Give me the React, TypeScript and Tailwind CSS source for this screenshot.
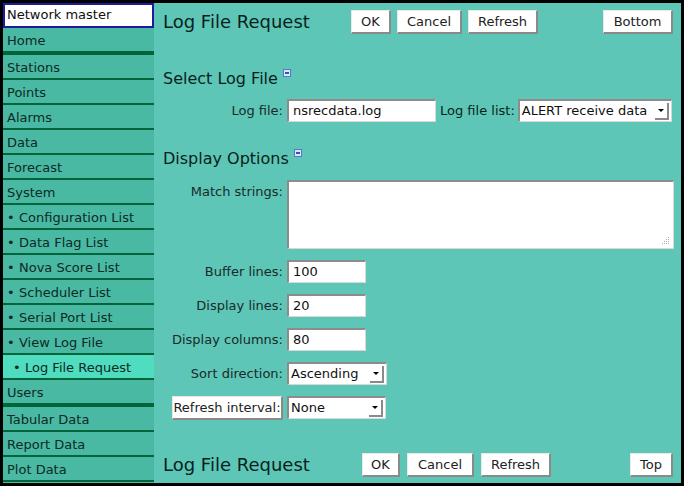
import React from 'react'

const sideItems: { label: string; sub?: boolean; active?: boolean; thick?: boolean }[] = [
  { label: 'Home', thick: true },
  { label: 'Stations' },
  { label: 'Points' },
  { label: 'Alarms' },
  { label: 'Data' },
  { label: 'Forecast' },
  { label: 'System' },
  { label: 'Configuration List', sub: true },
  { label: 'Data Flag List', sub: true },
  { label: 'Nova Score List', sub: true },
  { label: 'Scheduler List', sub: true },
  { label: 'Serial Port List', sub: true },
  { label: 'View Log File', sub: true },
  { label: 'Log File Request', sub: true, active: true },
  { label: 'Users', thick: true },
  { label: 'Tabular Data' },
  { label: 'Report Data' },
  { label: 'Plot Data' },
]

function Btn({ children, w }: { children: React.ReactNode; w: string }) {
  return (
    <button
      className={`${w} h-[24px] bg-white text-[13px] text-[#222] leading-none whitespace-nowrap px-0 border-t border-l border-t-[#e8e8e8] border-l-[#e8e8e8] border-r-2 border-b-2 border-r-[#8a8a8a] border-b-[#8a8a8a]`}
    >
      {children}
    </button>
  )
}

function Collapse() {
  return (
    <span className="inline-flex items-center justify-center w-[8px] h-[8px] ml-[5px] mt-[2px] border border-[#5577cc] bg-[#dde6ff] align-top">
      <span className="w-[4px] h-[2px] bg-[#3355aa]" />
    </span>
  )
}

function TextInput({ value, w }: { value: string; w: string }) {
  return (
    <div
      className={`${w} h-[23px] shrink-0 bg-white border-t-2 border-l-2 border-t-[#8c8c8c] border-l-[#8c8c8c] border-b border-r border-b-[#d8d8d8] border-r-[#d8d8d8] px-[4px] text-[13px] leading-[20px] text-[#111]`}
    >
      {value}
    </div>
  )
}

function Select({ value, w }: { value: string; w: string }) {
  return (
    <div
      className={`${w} h-[23px] shrink-0 bg-white flex items-center border-t-2 border-l-2 border-t-[#8c8c8c] border-l-[#8c8c8c] border-b border-r border-b-[#d8d8d8] border-r-[#d8d8d8] pl-[2px] pr-[2px] text-[13px] text-[#111]`}
    >
      <span className="flex-1 whitespace-nowrap">{value}</span>
      <span className="w-[14px] h-[17px] flex items-center justify-center border-r-2 border-b-2 border-r-[#8a8a8a] border-b-[#8a8a8a] bg-white">
        <span className="w-0 h-0 border-l-[3px] border-r-[3px] border-t-[3px] border-l-transparent border-r-transparent border-t-black" />
      </span>
    </div>
  )
}

function Label({ children }: { children: React.ReactNode }) {
  return <div className="text-right text-[13px] text-[#1a2a2a] leading-[23px] whitespace-nowrap">{children}</div>
}

export default function App() {
  return (
    <div
      className="w-[684px] h-[486px] border-[3px] border-black bg-[#5dc6b6] flex overflow-hidden"
      style={{ fontFamily: '"DejaVu Sans", sans-serif' }}
    >
      <div className="w-[151px] shrink-0 bg-[#49b9a3] flex flex-col">
        <div className="h-[25px] bg-white border-2 border-[#1c1c9c] px-[2px] text-[13px] leading-[20px] text-[#111]">
          Network master
        </div>
        {sideItems.map((it) => (
          <div
            key={it.label}
            className={`h-[25px] shrink-0 border-b-2 border-[#00663a] text-[13px] leading-[25px] text-[#0d2a24] whitespace-nowrap ${
              it.thick ? 'h-[27px] border-b-4' : ''
            } ${it.active ? 'bg-[#50dcbf] pl-[10px]' : 'pl-[4px]'}`}
          >
            {it.sub ? (
              <>
                <span className="inline-block w-[12px]">•</span>
                {it.label}
              </>
            ) : (
              it.label
            )}
          </div>
        ))}
      </div>

      <div className="flex-1 min-w-0 pl-[9px] pr-[8px] flex flex-col text-[#0a1f1c]">
        <div className="flex items-center mt-[7px] h-[24px]">
          <div className="w-[188px] shrink-0 text-[18px] leading-none whitespace-nowrap">Log File Request</div>
          <div className="flex gap-[6px]">
            <Btn w="w-[40px]">OK</Btn>
            <Btn w="w-[65px]">Cancel</Btn>
            <Btn w="w-[70px]">Refresh</Btn>
          </div>
          <div className="flex-1" />
          <Btn w="w-[70px]">Bottom</Btn>
        </div>

        <div className="mt-[33px] h-[24px] text-[16px] leading-[24px] font-medium whitespace-nowrap">
          Select Log File
          <Collapse />
        </div>

        <div className="mt-[8px] flex items-center">
          <div className="w-[120px] shrink-0">
            <Label>Log file:</Label>
          </div>
          <div className="ml-[4px] shrink-0">
            <TextInput value="nsrecdata.log" w="w-[149px]" />
          </div>
          <div className="ml-[4px] shrink-0 text-[13px] leading-[23px] whitespace-nowrap">Log file list:</div>
          <div className="ml-[3px] shrink-0">
            <Select value="ALERT receive data" w="w-[154px]" />
          </div>
        </div>

        <div className="mt-[25px] h-[24px] text-[16px] leading-[24px] font-medium whitespace-nowrap">
          Display Options
          <Collapse />
        </div>

        <div className="mt-[9px] grid grid-cols-[120px_1fr] gap-x-[4px] gap-y-[11px]">
          <div>
            <Label>Match strings:</Label>
          </div>
          <div className="relative w-[387px] h-[69px] bg-white border-t-2 border-l-2 border-t-[#8c8c8c] border-l-[#8c8c8c] border-b border-r border-b-[#d8d8d8] border-r-[#d8d8d8]">
            <svg className="absolute right-[3px] bottom-[3px]" width="9" height="9" viewBox="0 0 9 9">
              <g fill="#aaa">
                <rect x="7" y="1" width="1" height="1" />
                <rect x="5" y="3" width="1" height="1" />
                <rect x="7" y="3" width="1" height="1" />
                <rect x="3" y="5" width="1" height="1" />
                <rect x="5" y="5" width="1" height="1" />
                <rect x="7" y="5" width="1" height="1" />
                <rect x="1" y="7" width="1" height="1" />
                <rect x="3" y="7" width="1" height="1" />
                <rect x="5" y="7" width="1" height="1" />
                <rect x="7" y="7" width="1" height="1" />
              </g>
            </svg>
          </div>

          <Label>Buffer lines:</Label>
          <TextInput value="100" w="w-[79px]" />

          <Label>Display lines:</Label>
          <TextInput value="20" w="w-[79px]" />

          <Label>Display columns:</Label>
          <TextInput value="80" w="w-[79px]" />

          <Label>Sort direction:</Label>
          <Select value="Ascending" w="w-[100px]" />

          <div className="flex justify-end">
            <Btn w="w-[111px]">Refresh interval:</Btn>
          </div>
          <Select value="None" w="w-[99px]" />
        </div>

        <div className="flex-1" />

        <div className="flex items-center mb-[6px] h-[24px]">
          <div className="w-[199px] shrink-0 text-[18px] leading-none whitespace-nowrap">Log File Request</div>
          <div className="flex gap-[7px]">
            <Btn w="w-[38px]">OK</Btn>
            <Btn w="w-[67px]">Cancel</Btn>
            <Btn w="w-[70px]">Refresh</Btn>
          </div>
          <div className="flex-1" />
          <Btn w="w-[43px]">Top</Btn>
        </div>
      </div>
    </div>
  )
}
